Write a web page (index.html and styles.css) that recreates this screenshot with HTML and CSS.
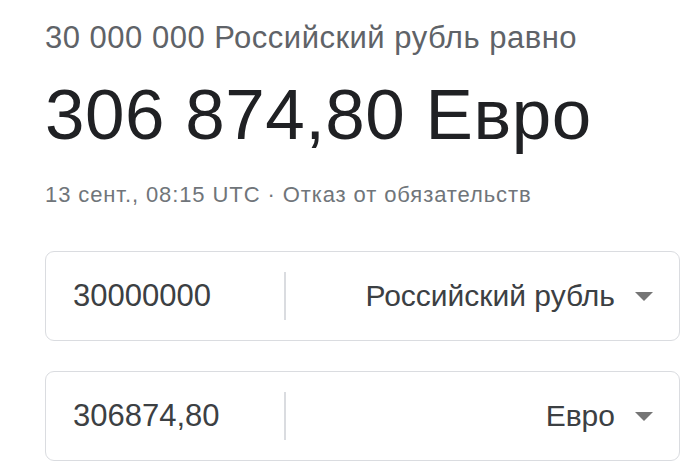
FILE: index.html
```html
<!DOCTYPE html>
<html lang="ru">
<head>
<meta charset="utf-8">
<link rel="stylesheet" href="styles.css">
</head>
<body>
<div class="card">
  <div class="lead">30 000 000 Российский рубль равно</div>
  <div class="result">306 874,80 Евро</div>
  <div class="meta">13 сент., 08:15 UTC · <span class="disclaimer">Отказ от обязательств</span></div>
  <div class="converter">
    <div class="row">
      <div class="amount">30000000</div>
      <div class="divider"></div>
      <div class="currency"><span class="name">Российский рубль</span><span class="arrow"></span></div>
    </div>
    <div class="row">
      <div class="amount">306874,80</div>
      <div class="divider"></div>
      <div class="currency"><span class="name">Евро</span><span class="arrow"></span></div>
    </div>
  </div>
</div>
</body>
</html>
```
FILE: styles.css
```css
html, body {
  margin: 0;
  padding: 0;
  background: #ffffff;
}
body {
  font-family: "Liberation Sans", Arial, sans-serif;
}
.card {
  padding: 21px 16px 0 45px;
}
.lead {
  font-size: 31px;
  line-height: 34px;
  letter-spacing: 0.5px;
  color: #5f6368;
}
.result {
  margin-top: 20px;
  font-size: 71px;
  line-height: 80px;
  letter-spacing: 0.5px;
  color: #202124;
}
.meta {
  margin-top: 28px;
  font-size: 22px;
  line-height: 24px;
  letter-spacing: 0.9px;
  color: #70757a;
}
.converter {
  margin-top: 44px;
  display: flex;
  flex-direction: column;
  gap: 30px;
}
.row {
  height: 88px;
  border: 1px solid #dadce0;
  border-radius: 9px;
  display: flex;
  align-items: center;
}
.amount {
  width: 211px;
  padding-left: 27px;
  font-size: 31px;
  color: #3c4043;
}
.divider {
  width: 2px;
  height: 48px;
  background: #dadce0;
}
.currency {
  flex: 1;
  display: flex;
  justify-content: flex-end;
  align-items: center;
  gap: 20px;
  padding-right: 26px;
  font-size: 30px;
  color: #3c4043;
}
.arrow {
  width: 0;
  height: 0;
  border-left: 9px solid transparent;
  border-right: 9px solid transparent;
  border-top: 9px solid #757575;
}
```
